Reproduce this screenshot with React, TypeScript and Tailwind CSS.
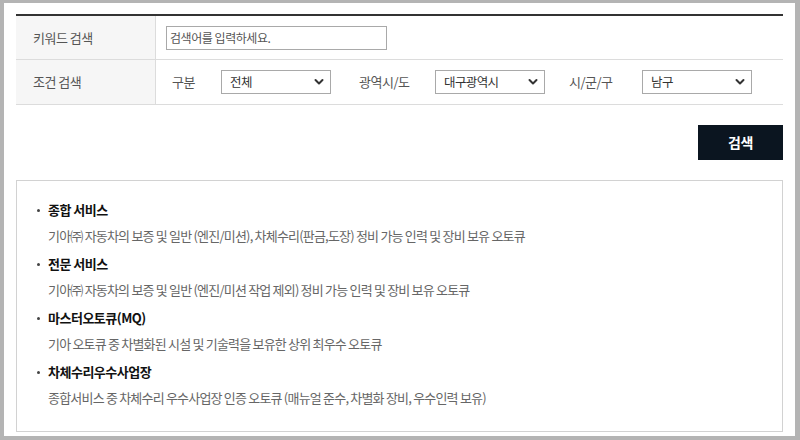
import React from "react";

const font = { fontFamily: '"Noto Sans CJK KR", "Noto Sans", sans-serif' };

function Chevron() {
  return (
    <svg width="10" height="8" viewBox="0 0 10 8" className="shrink-0">
      <path d="M1.5 2 L5 5.5 L8.5 2" fill="none" stroke="#333" strokeWidth="2" strokeLinecap="round" strokeLinejoin="round" />
    </svg>
  );
}

function FakeSelect({ value }: { value: string }) {
  return (
    <div className="w-[110px] h-[24px] border border-[#a9a9a9] bg-white flex items-center justify-between pl-[8px] pr-[6px] text-[12.5px] tracking-[-0.6px] text-[#333]">
      <span>{value}</span>
      <Chevron />
    </div>
  );
}

const items = [
  {
    title: "종합 서비스",
    desc: "기아㈜ 자동차의 보증 및 일반 (엔진/미션), 차체수리(판금,도장) 정비 가능 인력 및 장비 보유 오토큐",
  },
  {
    title: "전문 서비스",
    desc: "기아㈜ 자동차의 보증 및 일반 (엔진/미션 작업 제외) 정비 가능 인력 및 장비 보유 오토큐",
  },
  {
    title: "마스터오토큐(MQ)",
    desc: "기아 오토큐 중 차별화된 시설 및 기술력을 보유한 상위 최우수 오토큐",
  },
  {
    title: "차체수리우수사업장",
    desc: "종합서비스 중 차체수리 우수사업장 인증 오토큐 (매뉴얼 준수, 차별화 장비, 우수인력 보유)",
  },
];

export default function App() {
  return (
    <div className="w-[800px] h-[440px] bg-[#b4b4b4] pt-[3px] pl-[4px] pr-[5px] pb-[4px]" style={font}>
      <div className="w-full h-full bg-white px-[12px] pt-[11px]">
        {/* search table */}
        <div className="border-t-2 border-[#333]">
          <div className="flex h-[44px] border-b border-[#dcdcdc]">
            <div className="w-[140px] bg-[#f6f6f6] border-r border-[#dcdcdc] flex items-center pl-[17px] text-[13px] tracking-[-0.5px] text-[#555]">
              키워드 검색
            </div>
            <div className="flex items-center pl-[10px]">
              <div className="w-[221px] h-[24px] border border-[#a9a9a9] flex items-center pl-[3px] text-[12px] tracking-[-0.45px] text-[#555]">
                검색어를 입력하세요.
              </div>
            </div>
          </div>
          <div className="flex h-[45px] border-b border-[#dcdcdc]">
            <div className="w-[140px] bg-[#f6f6f6] border-r border-[#dcdcdc] flex items-center pl-[17px] text-[13px] tracking-[-0.5px] text-[#555]">
              조건 검색
            </div>
            <div className="flex items-center pl-[16px] text-[13px] tracking-[-0.5px] text-[#555]">
              <span className="w-[49px]">구분</span>
              <FakeSelect value="전체" />
              <span className="w-[104px] pl-[28px]">광역시/도</span>
              <FakeSelect value="대구광역시" />
              <span className="w-[97px] pl-[24px]">시/군/구</span>
              <FakeSelect value="남구" />
            </div>
          </div>
        </div>

        {/* button */}
        <div className="flex justify-end mt-[20px]">
          <button className="w-[85px] h-[35px] bg-[#0b1520] text-white text-[14px] font-bold tracking-[-0.3px]">
            검색
          </button>
        </div>

        {/* info box */}
        <div className="mt-[20px] h-[252px] border border-[#d2d2d2] pt-[19px] pl-[20px] flex flex-col gap-[8px]">
          {items.map((it) => (
            <div key={it.title} className="flex flex-col gap-[6px]">
              <div className="flex items-center h-[20px]">
                <span className="w-[3px] h-[3px] bg-[#444] rounded-full mr-[8px]" />
                <span className="text-[13px] font-bold tracking-[-0.5px] text-[#111]">{it.title}</span>
              </div>
              <div className="h-[20px] flex items-center pl-[11px] text-[13px] tracking-[-0.8px] text-[#666]">
                {it.desc}
              </div>
            </div>
          ))}
        </div>
      </div>
    </div>
  );
}
